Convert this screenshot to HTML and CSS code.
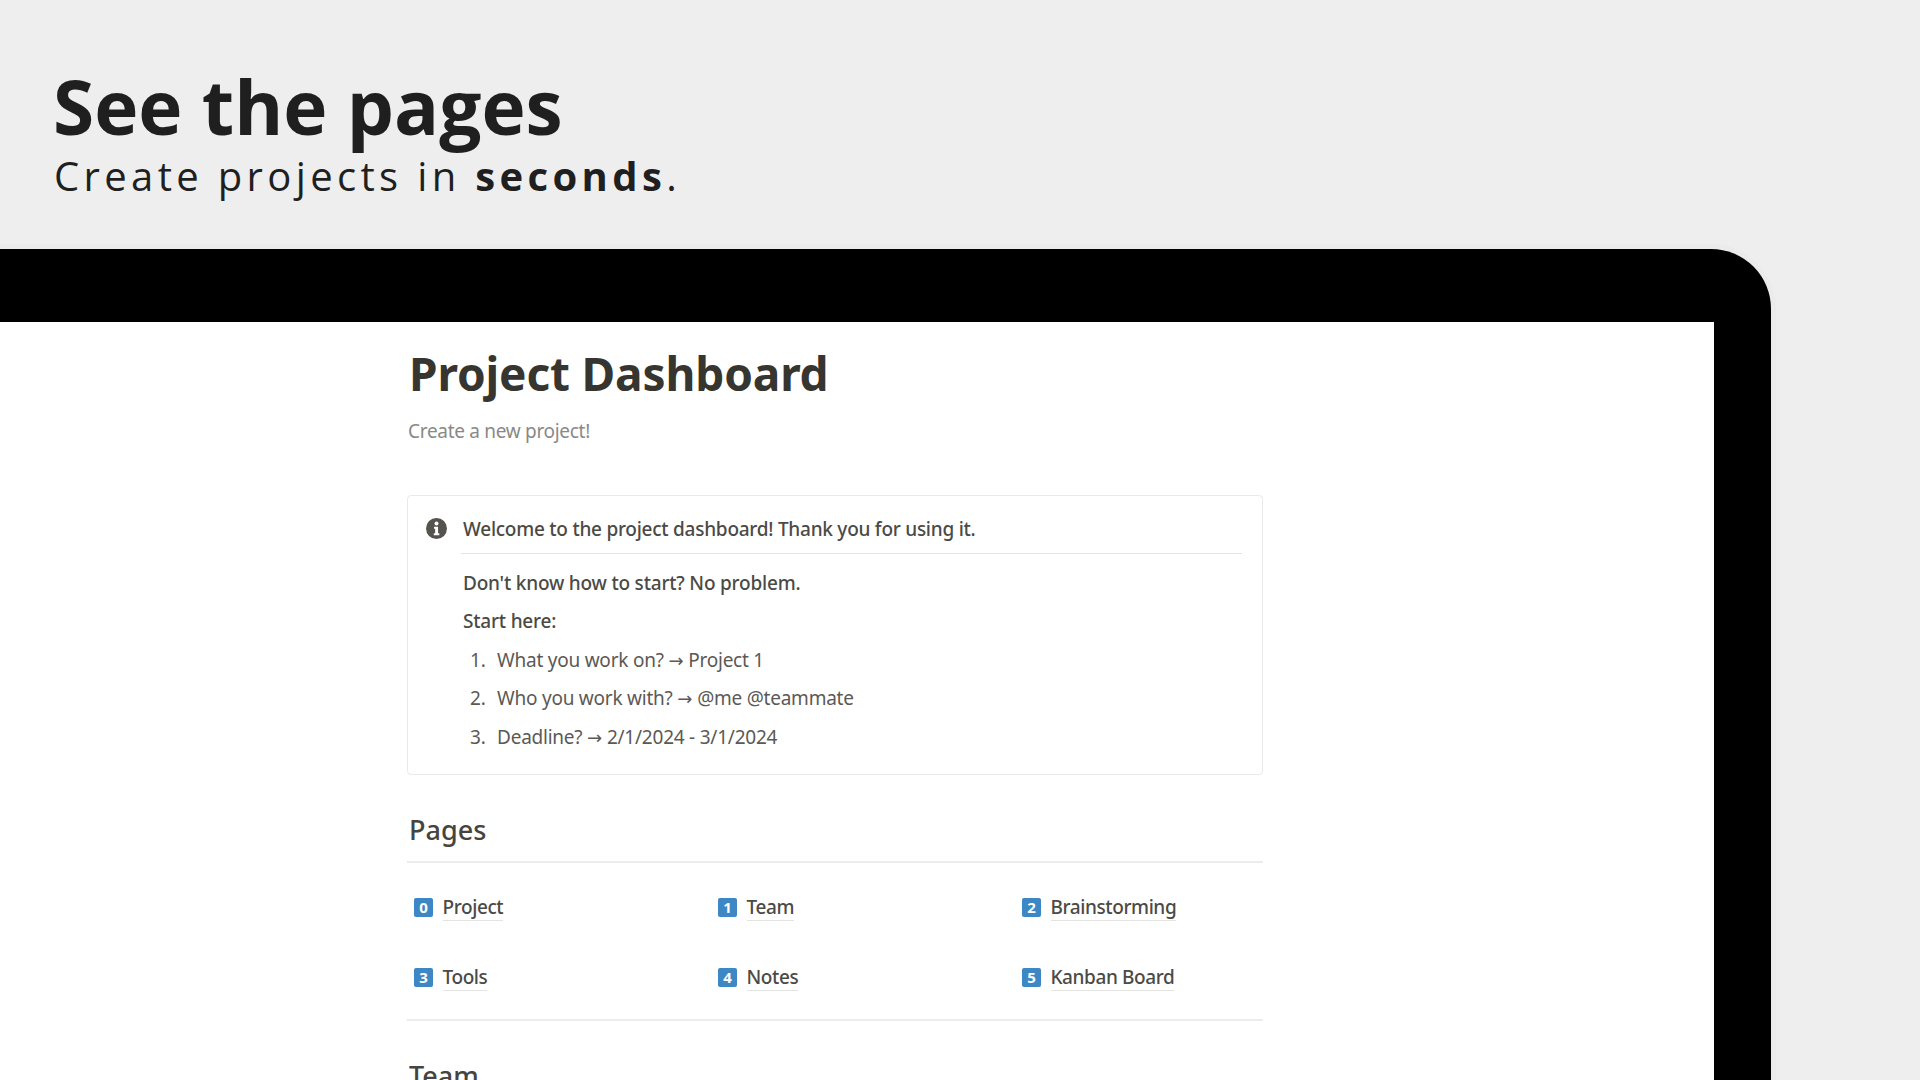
FILE: index.html
```html
<!DOCTYPE html>
<html lang="en">
<head>
<meta charset="utf-8">
<title>See the pages</title>
<link rel="stylesheet" href="styles.css">
</head>
<body>
<header class="hero">
  <h1 class="hero-title">See the pages</h1>
  <p class="hero-sub">Create projects in <b>seconds</b>.</p>
</header>
<section class="device">
  <div class="device-screen">
    <main class="doc">
      <h2 class="doc-title">Project Dashboard</h2>
      <p class="doc-sub">Create a new project!</p>
      <div class="callout">
        <div class="callout-head">
          <svg class="info-icon" viewBox="0 0 20 20" aria-hidden="true"><circle cx="10" cy="10" r="10" fill="#55534e"/><circle cx="10" cy="5.2" r="1.9" fill="#fff"/><path d="M7.6 8.4h3.9v6.2h1.2v1.8H7.4v-1.8h1.3v-4.4H7.6z" fill="#fff"/></svg>
          <div class="callout-title">Welcome to the project dashboard! Thank you for using it.</div>
        </div>
        <div class="callout-body">
          <p class="strong-line">Don't know how to start? No problem.</p>
          <p class="strong-line">Start here:</p>
          <ol class="steps">
            <li><span class="num">1.</span><span>What you work on? <span class="arrow">→</span> Project 1</span></li>
            <li><span class="num">2.</span><span>Who you work with? <span class="arrow">→</span> @me @teammate</span></li>
            <li><span class="num">3.</span><span>Deadline? <span class="arrow">→</span> 2/1/2024 - 3/1/2024</span></li>
          </ol>
        </div>
      </div>
      <h3 class="section-title">Pages</h3>
      <div class="rule"></div>
      <div class="pages">
        <div class="page"><span class="key">0</span><span class="link">Project</span></div>
        <div class="page"><span class="key">1</span><span class="link">Team</span></div>
        <div class="page"><span class="key">2</span><span class="link">Brainstorming</span></div>
        <div class="page"><span class="key">3</span><span class="link">Tools</span></div>
        <div class="page"><span class="key">4</span><span class="link">Notes</span></div>
        <div class="page"><span class="key">5</span><span class="link">Kanban Board</span></div>
      </div>
      <div class="rule"></div>
      <h3 class="section-title team">Team</h3>
    </main>
  </div>
</section>
</body>
</html>
```
FILE: styles.css
```css
* { box-sizing: border-box; }
html, body { margin: 0; height: 1080px; overflow: hidden; }
body { background: #eeeeee; font-family: "Open Sans", sans-serif; color: #1f1f1f; display: flex; flex-direction: column; }
.hero { height: 249px; padding: 61px 0 0 54px; flex: none; }
.hero-title { margin: 0 0 0 -1px; font-size: 74.7px; line-height: 90px; font-weight: 700; letter-spacing: 0; }
.hero-sub { margin: 1px 0 0; font-size: 40px; line-height: 48px; font-weight: 400; letter-spacing: 4.35px; }
.device { flex: 1; width: 1771px; background: #000; border-radius: 0 60px 0 0; padding: 73px 57px 0 0; box-shadow: 0 0 0 5px #ebebeb; min-height: 0; }
.device-screen { background: #fff; height: 100%; padding-left: 407px; overflow: hidden; font-family: "Noto Sans", sans-serif; color: #37352f; }
.doc { width: 856px; }
.doc-title { margin: 0; padding: 21px 0 0 2px; font-size: 46px; line-height: 60px; font-weight: 700; letter-spacing: -0.15px; }
.doc-sub { margin: 13px 0 0 1px; font-size: 19px; line-height: 30px; color: #8a8986; letter-spacing: -0.3px; }
.callout { margin-top: 49px; height: 280px; border: 1px solid #e9e9e8; border-radius: 4px; padding: 15px 20px 0 18px; }
.callout-head { display: flex; align-items: flex-start; }
.info-icon { width: 21px; height: 21px; margin: 7px 15px 0 0; flex: none; }
.callout-title { flex: 1; height: 43px; border-bottom: 1px solid #e3e3e2; font-size: 19px; line-height: 36px; letter-spacing: -0.25px; color: #4b4a45; padding-left: 2px; margin-left: -1px; font-weight: 500; }
.callout-body { padding: 10px 0 0 37px; font-size: 19px; letter-spacing: -0.23px; color: #5b5955; }
.strong-line { margin: 0; height: 38.4px; line-height: 38.4px; font-weight: 500; color: #4b4a45; letter-spacing: -0.2px; }
.steps { margin: 0; padding: 0 0 0 7px; list-style: none; }
.steps li { height: 38.4px; line-height: 38.4px; display: flex; }
.num { width: 27px; flex: none; }
.arrow { font-family: "DejaVu Sans", sans-serif; font-size: 18px; letter-spacing: 0; }
.section-title { margin: 0; font-size: 27px; line-height: 40px; font-weight: 500; padding-left: 2px; letter-spacing: 0; color: #45443f; }
.callout + .section-title { margin-top: 35px; }
.section-title.team { margin-top: 35px; }
.rule { height: 2px; background: #ececeb; }
.callout + .section-title + .rule { margin-top: 11px; }
.pages { display: grid; grid-template-columns: repeat(3, 304px); grid-auto-rows: 70px; padding: 9px 0 7px 7px; margin-right: -60px; }
.page { display: flex; align-items: center; }
.key { width: 19px; height: 19px; margin-right: 9.5px; background: #3d87c4; color: #fff; border-radius: 2px; font-size: 15px; line-height: 19px; font-weight: 700; text-align: center; letter-spacing: 0; }
.link { font-size: 19px; line-height: 26px; letter-spacing: -0.4px; color: #4b4a45; border-bottom: 1px solid #e4e4e3; font-weight: 500; }
```
